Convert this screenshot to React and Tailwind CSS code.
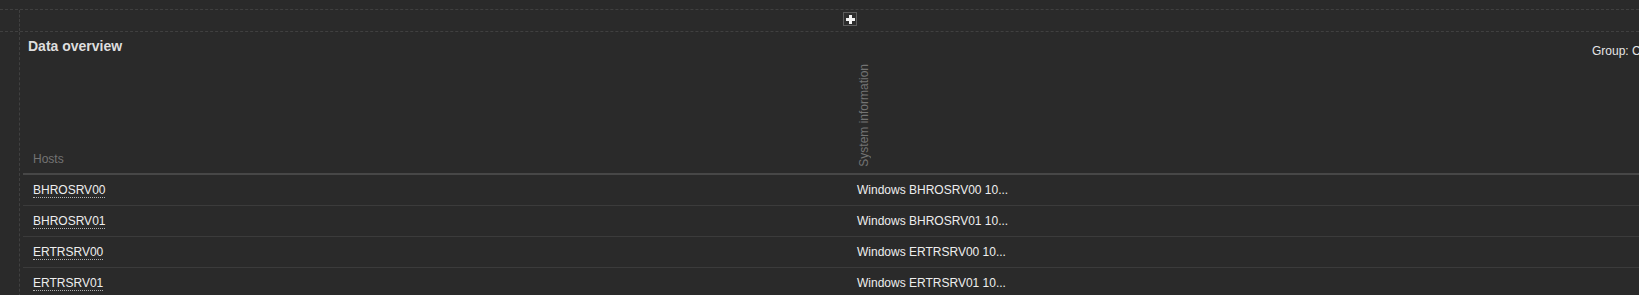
import React from "react";

const rows = [
  { host: "BHROSRV00", info: "Windows BHROSRV00 10..." },
  { host: "BHROSRV01", info: "Windows BHROSRV01 10..." },
  { host: "ERTRSRV00", info: "Windows ERTRSRV00 10..." },
  { host: "ERTRSRV01", info: "Windows ERTRSRV01 10..." },
];

export default function App() {
  return (
    <div
      className="w-[1639px] h-[295px] overflow-hidden bg-[#2a2a2a] pt-[9px]"
      style={{ fontFamily: '"Liberation Sans", Arial, Helvetica, sans-serif' }}
    >
      {/* top toolbar strip */}
      <div className="h-[23px] border-y border-dashed border-[#404040] flex">
        <div className="ml-[19px] border-l border-dashed border-[#404040] flex-1 flex pt-[2px]">
          <button className="ml-[823px] w-[14px] h-[14px] border border-[#5c5c5c] bg-[#2d2d2d] flex items-center justify-center">
            <svg width="9" height="9" viewBox="0 0 9 9">
              <rect x="3" y="0" width="3" height="9" fill="#f2f2f2" />
              <rect x="0" y="3" width="9" height="3" fill="#f2f2f2" />
            </svg>
          </button>
        </div>
      </div>

      {/* main widget area */}
      <div className="h-[300px] ml-[19px] border-l border-dashed border-[#404040] w-[1700px]">
        <div className="h-[26px] flex">
          <div className="w-[1572px] shrink-0 pl-[8px] pt-[6px] text-[14px] leading-[16px] font-bold text-[#dedede]">
            Data overview
          </div>
          <div className="pt-[12px] text-[12px] leading-[14px] text-[#e6e6e6] whitespace-nowrap">
            Group: Critical servers
          </div>
        </div>

        <div className="ml-[3px]">
          <div className="h-[117px] flex border-b-2 border-[#474747]">
            <div className="w-[824px] shrink-0 pl-[10px] pb-[7px] flex items-end text-[12px] leading-[14px] text-[#747474]">
              Hosts
            </div>
            <div className="flex-1 pl-[10px] pb-[6px] flex items-end">
              <span className="[writing-mode:vertical-rl] rotate-180 text-[12px] leading-[14px] text-[#747474] whitespace-nowrap">
                System information
              </span>
            </div>
          </div>

          {rows.map((r) => (
            <div key={r.host} className="h-[31px] flex items-center border-b border-[#3b3b3b]">
              <div className="w-[824px] shrink-0 pl-[10px] text-[12px] leading-[14px]">
                <span className="text-[#eeeeee] border-b border-dotted border-[#b0b0b0]">{r.host}</span>
              </div>
              <div className="flex-1 pl-[10px] text-[12px] leading-[14px] text-[#eeeeee] whitespace-nowrap">
                {r.info}
              </div>
            </div>
          ))}
        </div>
      </div>
    </div>
  );
}
